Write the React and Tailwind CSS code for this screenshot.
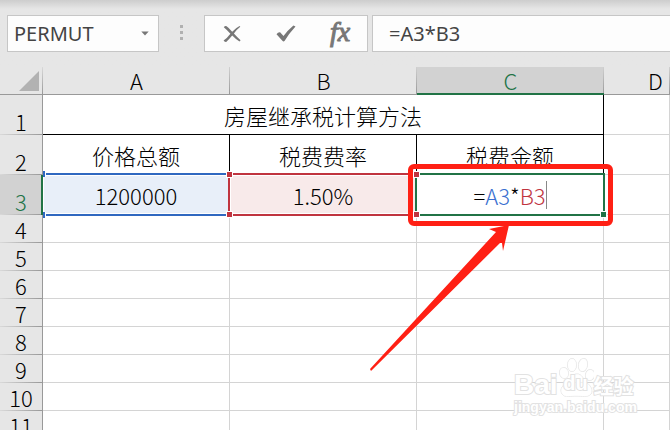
/**
 * Sheet: formula bar + grid of a spreadsheet while the tax formula is being typed.
 * C3 is in edit mode, A3 and B3 are its referenced cells.
 */
import clsx from "clsx";

const COLUMNS = ["A", "B", "C", "D"];
const EMPTY_ROWS = [4, 5, 6, 7, 8, 9, 10, 11];

const CELL = "relative p-0 border-r border-b border-[#d4d4d4] text-center font-light whitespace-nowrap";
const INKED = "relative p-0 border-r border-b border-black text-center font-light whitespace-nowrap";

function NameBox() {
  return (
    <div className="relative w-[152px] shrink-0">
      <select
        aria-label="Name box"
        className="h-full w-full appearance-none border border-[#c6c6c6] bg-[#fdfdfd] pl-1.5 text-xl text-[#444] outline-none"
      >
        <option>PERMUT</option>
      </select>
      <svg viewBox="0 0 8 5" className="pointer-events-none absolute right-2.5 top-4 h-[5px] w-2 fill-[#777]">
        <path d="M0.3 0.5h7.4L4 4.6z" />
      </svg>
    </div>
  );
}

function FormulaBar() {
  return (
    <div className="flex h-[67px] bg-linear-to-b from-[#cdcdcd] to-[#e6e6e6] to-[9px] pb-[15px] pl-[7px] pt-[15px] font-['Noto_Sans',sans-serif]">
      <NameBox />
      <div className="flex w-[45px] shrink-0 flex-col items-center gap-[3px] pt-[10px]">
        <span className="size-[3px] bg-[#b0b0b0]" />
        <span className="size-[3px] bg-[#b0b0b0]" />
        <span className="size-[3px] bg-[#b0b0b0]" />
      </div>
      <div className="grid w-[164px] shrink-0 grid-cols-3 border border-[#c6c6c6] bg-[#fdfdfd] text-[#777]">
        <button type="button" aria-label="Cancel" className="flex items-center justify-center">
          <svg viewBox="0 0 18 18" className="size-[18px] fill-current">
            <path d="M0.8 2.2Q2 0.4 3.6 1.2Q6 2.8 9.2 6.7Q12.8 2.7 16.6 0.9L17.3 1.7Q14 4.2 10.9 8.4Q13.8 11.6 17.6 15.2L16.5 16.6Q12.6 14 9.2 10.5Q6.3 14 3.2 17Q1.3 17.2 0.6 15.6Q4.3 12.8 7.4 8.7Q4.2 5.1 0.8 2.2Z" />
          </svg>
        </button>
        <button type="button" aria-label="Enter" className="flex items-center justify-center">
          <svg viewBox="0 0 20 17" className="h-[17px] w-5 fill-current">
            <path d="M0.5 9.2Q2 7 4.1 7.3L7.5 10.9Q11.6 5.6 17.4 0.6L19.5 1.6Q13 8.6 8.7 15.8Q7.5 17 6.4 15.8Z" />
          </svg>
        </button>
        <button
          type="button"
          aria-label="Insert function"
          className="flex items-center justify-center pb-1 font-['Liberation_Serif',serif] text-[28px] italic leading-none [-webkit-text-stroke:1px_#777]"
        >
          fx
        </button>
      </div>
      <input
        aria-label="Formula"
        defaultValue="=A3*B3"
        className="ml-1 min-w-0 flex-1 border border-r-0 border-[#c6c6c6] bg-[#fdfdfd] pl-4 text-xl text-[#444] outline-none"
      />
    </div>
  );
}

function RowHead({ n, active }) {
  return (
    <th
      scope="row"
      className={clsx(
        "border-r bg-[linear-gradient(to_right,#d9d9d9,#999)] bg-[length:100%_1px] bg-bottom bg-no-repeat p-0 align-bottom font-light leading-7",
        active
          ? "border-[#217346] bg-[#d2d2d2] text-[#217346] shadow-[inset_-1px_0_#217346]"
          : "border-[#999] bg-[#e6e6e6] text-black"
      )}
    >
      {n}
    </th>
  );
}

function Handle({ className }) {
  return <span className={clsx("absolute z-10 size-[7px] border border-white", className)} />;
}

// Highlight of a cell that the formula refers to
function RefFrame({ className }) {
  return <span className={clsx("absolute -inset-[2px] border-2 shadow-[inset_0_0_0_1px_white]", className)} />;
}

function Callout() {
  return (
    <>
      <span className="absolute -bottom-[12px] -left-[9px] -right-[10px] -top-[11px] z-20 rounded-md border-[5px] border-[#ff2014]" />
      <svg
        viewBox="0 0 144 150"
        className="absolute -left-[50px] top-[48px] z-20 h-[150px] w-36 max-w-none fill-[#ff2014]"
      >
        <path d="M142 2L122 6L129 9L3 146L4 148L133 20L135 20L136 28Z" />
      </svg>
    </>
  );
}

function Watermark() {
  return (
    <div
      aria-hidden="true"
      className="pointer-events-none absolute left-[514px] top-[357px] z-30 font-['Liberation_Sans','Noto_Sans_CJK_SC',sans-serif] font-bold text-white [-webkit-text-stroke:2px_#e2e2e2] [paint-order:stroke_fill]"
    >
      <div className="flex h-10 items-end leading-6">
        <span className="text-[28px]">Bai</span>
        <span className="relative flex h-10 w-9 items-end justify-center text-xl">
          <svg viewBox="0 0 36 40" className="absolute inset-0 fill-white/70 stroke-[#e2e2e2]">
            <ellipse cx="6" cy="16" rx="4.500" ry="5.500" transform="rotate(-12 6 16)" />
            <ellipse cx="14" cy="8" rx="4.500" ry="6.500" />
            <ellipse cx="25" cy="8" rx="4.500" ry="6.500" transform="rotate(10 25 8)" />
            <ellipse cx="32" cy="18" rx="4.500" ry="5.500" transform="rotate(14 32 18)" />
            <path d="M19 17C13 17 12 23 8 26C3 30 2 33 4 37C7 41 13 39 18 39C24 39 29 41 33 37C35 33 33 29 29 26C25 22 24 17 19 17Z" />
          </svg>
          <span className="relative">du</span>
        </span>
        <span className="text-xl leading-5">经验</span>
      </div>
      <div className="text-sm leading-5">jingyan.baidu.com</div>
    </div>
  );
}

export default function App() {
  return (
    <main className="relative h-screen overflow-hidden bg-white">
      <FormulaBar />
      <table className="w-full table-fixed border-separate border-spacing-0 font-['Noto_Sans_CJK_SC',sans-serif] text-[22px] leading-7 text-black">
        <colgroup>
          <col className="w-[43px]" />
          <col className="w-[187px]" />
          <col className="w-[187px]" />
          <col className="w-[187px]" />
          <col />
        </colgroup>
        <thead>
          <tr className="h-7">
            <td className="border-b border-[#999] bg-[#e6e6e6] bg-[linear-gradient(to_bottom,#d9d9d9,#999)] bg-[length:1px_100%] bg-right bg-no-repeat p-0 pr-1 align-bottom">
              <svg viewBox="0 0 20 20" className="mb-[3px] ml-auto block size-5 fill-[#b2b2b2]">
                <path d="M20 0v20H0z" />
              </svg>
            </td>
            {COLUMNS.map((c) => (
              <th
                key={c}
                scope="col"
                className={clsx(
                  "border-b bg-[linear-gradient(to_bottom,#d0d0d0,#999)] bg-[length:1px_100%] bg-right bg-no-repeat p-0 font-light leading-[27px]",
                  c === "C"
                    ? "border-[#217346] bg-[#d2d2d2] text-[#217346] shadow-[inset_0_-1px_#217346]"
                    : "border-[#999] bg-[#e6e6e6]",
                  c === "D" && "pl-11 text-left"
                )}
              >
                {c}
              </th>
            ))}
          </tr>
        </thead>
        <tbody>
          <tr className="h-10">
            <RowHead n={1} />
            <td colSpan={3} className={INKED}>房屋继承税计算方法</td>
            <td className={CELL} />
          </tr>
          <tr className="h-10">
            <RowHead n={2} />
            <td className={INKED}>价格总额</td>
            <td className={INKED}>税费费率</td>
            <td className={INKED}>税费金额</td>
            <td className={CELL} />
          </tr>
          <tr className="h-10">
            <RowHead n={3} active />
            <td className={clsx(CELL, "bg-[#e8eff9]")}>
              <span className="absolute -bottom-[2px] -top-[2px] left-0 right-0 border-y-2 border-[#2f68c0] shadow-[inset_0_0_0_1px_white]" />
              <span className="absolute -top-[4px] left-0 h-[6px] w-[3px] border-r border-white bg-[#2f68c0]" />
              <span className="absolute -bottom-[4px] left-0 h-[6px] w-[3px] border-r border-white bg-[#2f68c0]" />
              <span className="relative">1200000</span>
            </td>
            <td className={clsx(CELL, "bg-[#f8eaea]")}>
              <RefFrame className="border-[#c0343f]" />
              <Handle className="-left-[4px] -top-[4px] bg-[#c0343f]" />
              <Handle className="-bottom-[4px] -left-[4px] bg-[#c0343f]" />
              <Handle className="-right-[4px] -top-[4px] bg-[#c0343f]" />
              <Handle className="-bottom-[4px] -right-[4px] bg-[#c0343f]" />
              <span className="relative">1.50%</span>
            </td>
            <td className={CELL}>
              <RefFrame className="border-[#217346]" />
              <Handle className="-bottom-[4px] -right-[4px] bg-[#217346]" />
              <span className="inline-flex items-center">
                =<span className="text-[#3a6fd0]">A3</span>*<span className="text-[#c0343f]">B3</span>
                <span className="h-7 w-px bg-[#888]" />
              </span>
              <Callout />
            </td>
            <td className={CELL} />
          </tr>
          {EMPTY_ROWS.map((n) => (
            <tr key={n} className="h-7">
              <RowHead n={n} />
              {COLUMNS.map((c) => (
                <td key={c} className={CELL} />
              ))}
            </tr>
          ))}
        </tbody>
      </table>
      <Watermark />
    </main>
  );
}
